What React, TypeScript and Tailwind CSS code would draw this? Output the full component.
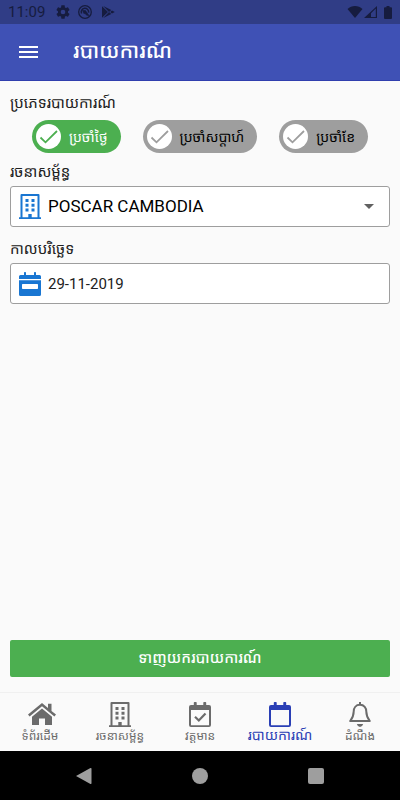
import { useState } from "react";
import type { ReactNode } from "react";

const reportTypes = [
  { id: "daily", label: "ប្រចាំថ្ងៃ" },
  { id: "weekly", label: "ប្រចាំសប្តាហ៍" },
  { id: "monthly", label: "ប្រចាំខែ" },
];

function StatusBar() {
  return (
    <div className="flex h-6 items-center bg-[#303d86] px-2 text-[#161c3f]">
      <span className="text-[15px] leading-6">11:09</span>
      <svg className="ml-2.5 size-4" viewBox="0 0 24 24" fill="currentColor">
        <path d="M19.43 12.98c.04-.32.07-.64.07-.98s-.03-.66-.07-.98l2.11-1.65c.19-.15.24-.42.12-.64l-2-3.46c-.12-.22-.39-.3-.61-.22l-2.49 1c-.52-.4-1.08-.73-1.69-.98l-.38-2.65C14.46 2.18 14.25 2 14 2h-4c-.25 0-.46.18-.49.42l-.38 2.65c-.61.25-1.17.59-1.69.98l-2.49-1c-.23-.09-.49 0-.61.22l-2 3.46c-.13.22-.07.49.12.64l2.11 1.65c-.04.32-.07.65-.07.98s.03.66.07.98l-2.11 1.65c-.19.15-.24.42-.12.64l2 3.46c.12.22.39.3.61.22l2.49-1c.52.4 1.08.73 1.69.98l.38 2.65c.03.24.24.42.49.42h4c.25 0 .46-.18.49-.42l.38-2.65c.61-.25 1.17-.59 1.69-.98l2.49 1c.23.09.49 0 .61-.22l2-3.46c.12-.22.07-.49-.12-.64l-2.11-1.65zM12 15.5a3.5 3.5 0 1 1 0-7 3.5 3.5 0 0 1 0 7z" />
      </svg>
      <svg className="ml-[7px] size-3.5" viewBox="0 0 14 14" fill="none" stroke="currentColor">
        <circle cx="7" cy="7" r="6.3" strokeWidth="1.3" />
        <path d="M3.6 8.500A3.700 3.700 0 1 1 10.600 7.600" strokeWidth="1.500" />
        <path d="M4.600 5.400 7.500 5.600 11 10.600 8.800 10.200 7 8.600 5.800 8.400z" fill="currentColor" strokeWidth="0.6" />
      </svg>
      <svg className="ml-2.5 h-3 w-3.5" viewBox="0 0 14 12" fill="currentColor">
        <path d="M0 0.3 6 6 0 11.7zM1.2 0 9.3 4 7 6zM1.2 12 9.3 8 7 6zM10 4.4 12.8 6 10 7.6 8.2 6z" />
      </svg>
      <svg className="ml-auto h-3 w-4" viewBox="0 0 16 12" fill="currentColor">
        <path d="M0.5 3C4.5-1 11.500-1 15.500 3L8 12z" />
      </svg>
      <svg className="ml-px h-3 w-[13px]" viewBox="0 0 13 12" fill="currentColor">
        <path d="M13 0v12H0zM11.800 2.500 7 7.200V11h4.800z" fillRule="evenodd" />
      </svg>
      <svg className="ml-[7px] h-[13px] w-2" viewBox="0 0 8 13" fill="currentColor">
        <path d="M2.500 0h3v1.300H7a1 1 0 0 1 1 1V12a1 1 0 0 1-1 1H1a1 1 0 0 1-1-1V2.300a1 1 0 0 1 1-1h1.500z" />
      </svg>
    </div>
  );
}

function Header() {
  return (
    <header className="flex h-[57px] items-center border-b border-[#303fae] bg-[#3f51b5] text-white">
      <button type="button" aria-label="ម៉ឺនុយ" className="ml-[19px] flex h-10 w-[19px] flex-col justify-center gap-[3px]">
        <span className="h-0.5 w-full bg-white" />
        <span className="h-0.5 w-full bg-white" />
        <span className="h-0.5 w-full bg-white" />
      </button>
      <h1 className="ml-[35px] text-[21px] font-medium">របាយការណ៍</h1>
    </header>
  );
}

function HomeIcon() {
  return (
    <svg className="ml-1 h-[22px] w-7" viewBox="0 0 28 22" fill="currentColor">
      <path d="M14 0 20 5V.8H23.500V8L28 11.600 26.400 13.400 14 3.200 1.600 13.400 0 11.600z" />
      <path d="M14 5.600 24 13.800V22H17V15.500H11V22H4V13.800z" />
    </svg>
  );
}

function BuildingIcon() {
  return (
    <svg className="h-[25px] w-[22px] shrink-0" viewBox="0 0 22 25" fill="currentColor">
      <path fillRule="evenodd" d="M2.500 0H19.500Q20.500 0 20.500 1V23.200H22V25H0V23.200H1.500V1Q1.500 0 2.500 0zM3.500 2V23.200H9.300V20H12.700V23.200H18.500V2z" />
      <path d="M6.500 5H9.500V8H6.500zM12.500 5H15.500V8H12.500zM6.500 9.700H9.500V12.700H6.500zM12.500 9.700H15.500V12.700H12.500zM6.500 14.400H9.500V17.400H6.500zM12.500 14.400H15.500V17.400H12.500z" />
    </svg>
  );
}

function BellIcon() {
  return (
    <svg className="h-[25px] w-[22px]" viewBox="0 0 22 25" fill="currentColor">
      <path d="M11 2.800C6.800 2.800 4.700 6 4.700 9.500 4.700 14 3.500 16 1.200 19H20.800C18.500 16 17.300 14 17.300 9.500 17.300 6 15.200 2.800 11 2.800z" fill="none" stroke="currentColor" strokeWidth="2" strokeLinejoin="round" />
      <path d="M10 0H12V3H10zM7.800 22H14.200Q13.300 25 11 25T7.800 22z" />
    </svg>
  );
}

function CalendarSolid() {
  return (
    <svg className="h-6 w-[22px] shrink-0" viewBox="0 0 22 24" fill="#1976d2">
      <path d="M0 7V4.500Q0 3 1.500 3H5V.7Q5 0 5.700 0H6.300Q7 0 7 .7V3H15V.7Q15 0 15.700 0H16.300Q17 0 17 .7V3H20.500Q22 3 22 4.500V7z" />
      <path fillRule="evenodd" d="M0 8.300H22V22.500Q22 24 20.500 24H1.500Q0 24 0 22.500zM3.700 12Q3 12 3 12.700V16.300Q3 17 3.700 17H18.300Q19 17 19 16.300V12.700Q19 12 18.300 12z" />
    </svg>
  );
}

function CalendarOutline({ checked = false }: { checked?: boolean }) {
  return (
    <svg className="h-[25px] w-[22px]" viewBox="0 0 22 25" fill="currentColor">
      <path
        fillRule="evenodd"
        d="M2 3H4.800V.7Q4.800 0 5.500 0H7Q7.700 0 7.700.7V3H14.300V.7Q14.300 0 15 0H16.500Q17.200 0 17.200.7V3H20Q22 3 22 5V23Q22 25 20 25H2Q0 25 0 23V5Q0 3 2 3zM2 8V22.700Q2 23.200 2.500 23.200H19.500Q20 23.200 20 22.700V8z"
      />
      {checked && <path d="M6 14.800 9.800 18.500 16.500 11.500" fill="none" stroke="currentColor" strokeWidth="2.200" />}
    </svg>
  );
}

function NavItem({ icon, label, active = false }: { icon: ReactNode; label: string; active?: boolean }) {
  return (
    <a
      href="#"
      aria-current={active ? "page" : undefined}
      className={
        active
          ? "flex flex-1 flex-col items-center pt-2 text-sm leading-4 whitespace-nowrap text-[#2a3fb5]"
          : "flex flex-1 flex-col items-center pt-2 text-xs leading-[18px] whitespace-nowrap text-[#6b6b6b]"
      }
    >
      <span className="flex h-[26px] items-center">{icon}</span>
      {label}
    </a>
  );
}

export default function App() {
  const [type, setType] = useState("daily");
  const [date, setDate] = useState("29-11-2019");

  return (
    <div className="flex min-h-screen flex-col bg-[#fafafa] font-[Roboto,'Noto_Sans_Khmer',sans-serif] text-[#212121]">
      <StatusBar />
      <Header />
      <main className="flex flex-1 flex-col px-2.5 pt-2.5 pb-[15px]">
        <fieldset>
          <legend className="text-[15px] leading-6">ប្រភេទរបាយការណ៍</legend>
          <div className="mt-[5px] flex justify-evenly">
            {reportTypes.map((item) => {
              const on = item.id === type;
              return (
                <label
                  key={item.id}
                  className={
                    on
                      ? "flex h-[33px] cursor-pointer items-center gap-2 rounded-full bg-[#4caf50] pr-[13px] pl-1 text-sm whitespace-nowrap text-white"
                      : "flex h-[33px] cursor-pointer items-center gap-2 rounded-full bg-[#9e9e9e] pr-[13px] pl-1 text-sm whitespace-nowrap text-black"
                  }
                >
                  <input
                    type="radio"
                    name="report-type"
                    className="sr-only"
                    checked={on}
                    onChange={() => setType(item.id)}
                  />
                  <svg className="size-[25px] shrink-0" viewBox="0 0 25 25" fill="none">
                    <circle cx="12.500" cy="12.500" r="12.500" fill="white" />
                    <path d="M4.500 13.500 9.500 18.300 21 7" stroke={on ? "#4caf50" : "#9e9e9e"} strokeWidth="1.800" />
                  </svg>
                  {item.label}
                </label>
              );
            })}
          </div>
        </fieldset>

        <label htmlFor="organization" className="mt-[7px] text-[15px] leading-6">
          រចនាសម្ព័ន្ធ
        </label>
        <div className="mt-0.5 flex h-[41px] items-center rounded-[3px] border border-[#9e9e9e] bg-white pr-[15px] pl-2 text-[#1976d2]">
          <BuildingIcon />
          <select id="organization" className="ml-[7px] h-full min-w-0 flex-1 appearance-none bg-transparent text-[17px] text-black outline-none">
            <option>POSCAR CAMBODIA</option>
          </select>
          <svg className="h-[5px] w-2.5" viewBox="0 0 10 5" fill="#616161">
            <path d="M0 0H10L5 5z" />
          </svg>
        </div>

        <label htmlFor="date" className="mt-2.5 text-[15px] leading-6">
          កាលបរិច្ឆេទ
        </label>
        <div className="mt-0.5 flex h-[41px] items-center rounded-[3px] border border-[#9e9e9e] bg-white px-2">
          <CalendarSolid />
          <input
            id="date"
            type="text"
            value={date}
            onChange={(e) => setDate(e.target.value)}
            className="ml-[7px] h-full min-w-0 flex-1 bg-transparent text-[15px] outline-none"
          />
        </div>

        <button type="button" className="mt-auto h-[37px] rounded-xs bg-[#4caf50] text-[15px] font-medium text-white">
          ទាញយករបាយការណ៍
        </button>
      </main>

      <nav className="flex h-[59px] border-t border-[#f0f0f0] bg-[#fafafa]">
        <NavItem icon={<HomeIcon />} label="ទំព័រដើម" />
        <NavItem icon={<BuildingIcon />} label="រចនាសម្ព័ន្ធ" />
        <NavItem icon={<CalendarOutline checked />} label="វត្តមាន" />
        <NavItem icon={<CalendarOutline />} label="របាយការណ៍" active />
        <NavItem icon={<BellIcon />} label="ដំណឹង" />
      </nav>

      <div className="flex h-[49px] items-center justify-between bg-black px-[76px] text-[#9e9e9e]">
        <button type="button" aria-label="Back">
          <svg className="size-4" viewBox="0 0 16 16" fill="currentColor">
            <path d="M0 8 14 .2Q15.500-.5 15.500 1V15Q15.500 16.500 14 15.800z" />
          </svg>
        </button>
        <button type="button" aria-label="Home" className="size-4 rounded-full bg-[#9e9e9e]" />
        <button type="button" aria-label="Recent" className="size-4 rounded-xs bg-[#9e9e9e]" />
      </div>
    </div>
  );
}
